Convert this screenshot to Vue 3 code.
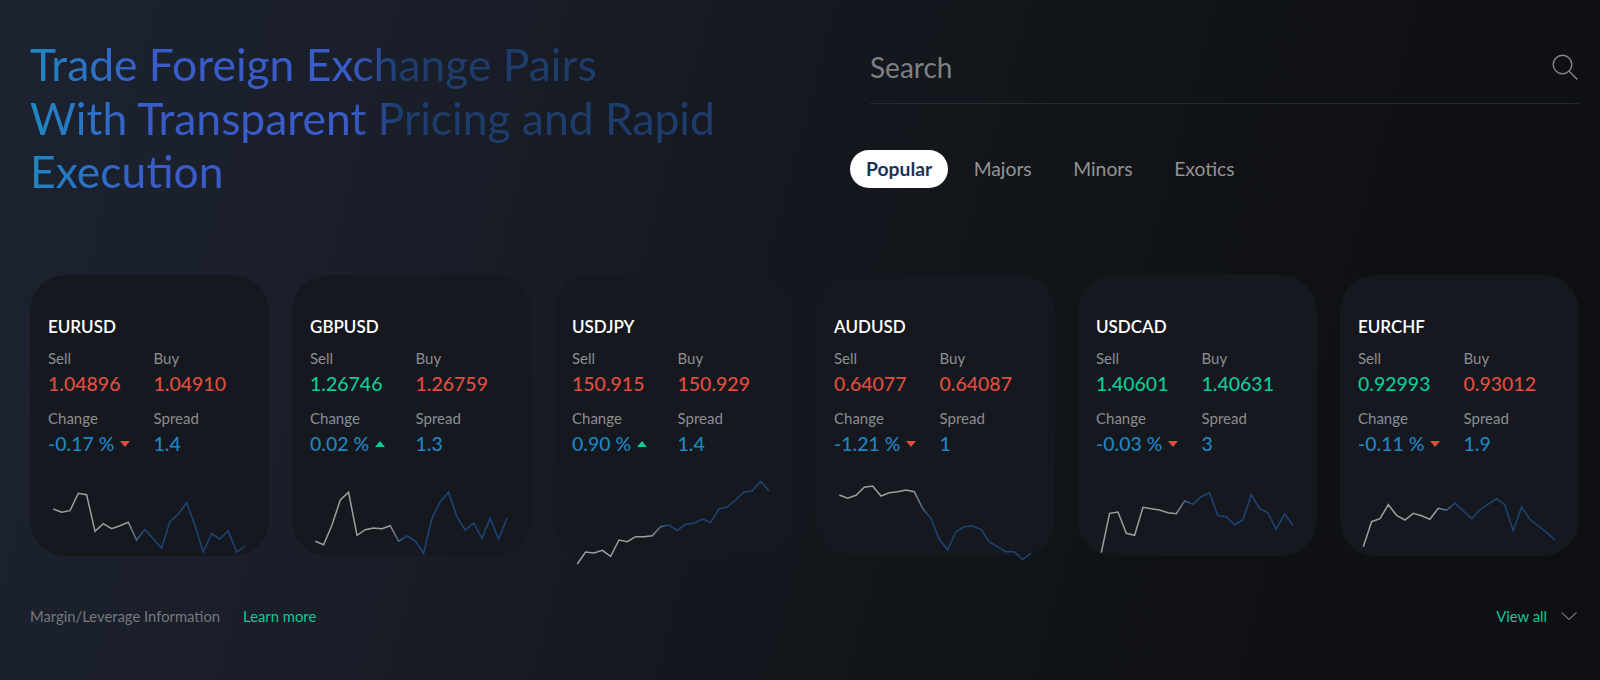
<script setup>
const cards = [
  { name: 'EURUSD', sell: '1.04896', buy: '1.04910', sellUp: false, buyUp: false, change: '-0.17 %', up: false, spread: '1.4',
    ys: [117,127,122,70,74,184,161,176,167,157,210,178,206,235,155,133,98,165,246,191,207,182,246,228] },
  { name: 'GBPUSD', sell: '1.26746', buy: '1.26759', sellUp: true, buyUp: false, change: '0.02 %', up: true, spread: '1.3',
    ys: [214,224,165,90,67,196,179,174,176,167,214,198,213,250,145,95,67,140,180,159,205,145,208,145] },
  { name: 'USDJPY', sell: '150.915', buy: '150.929', sellUp: false, buyUp: false, change: '0.90 %', up: true, spread: '1.4',
    ys: [282,246,249,241,259,210,215,200,200,197,170,165,181,163,160,147,157,117,111,90,66,63,34,62] },
  { name: 'AUDUSD', sell: '0.64077', buy: '0.64087', sellUp: false, buyUp: false, change: '-1.21 %', up: false, spread: '1',
    ys: [75,85,76,52,48,78,68,65,60,65,115,145,208,240,185,170,168,178,216,230,245,245,268,250] },
  { name: 'USDCAD', sell: '1.40601', buy: '1.40631', sellUp: true, buyUp: true, change: '-0.03 %', up: false, spread: '3',
    ys: [248,130,126,190,196,112,116,120,128,131,93,103,80,68,137,140,164,150,74,116,128,178,132,166] },
  { name: 'EURCHF', sell: '0.92993', buy: '0.93012', sellUp: true, buyUp: false, change: '-0.11 %', up: false, spread: '1.9',
    ys: [230,155,146,104,136,150,130,137,148,115,121,100,122,146,120,102,86,105,182,111,148,168,187,210] },
]
const points = (ys) =>
  ys.map((v, i) => `${(23.3 + i * 8.33).toFixed(1)},${(v / 3).toFixed(1)}`).join(' ')
const tabs = ['Popular', 'Majors', 'Minors', 'Exotics']
</script>

<template>
  <div class="page">
    <header class="head">
      <h1 class="title">Trade Foreign Exchange Pairs<br />With Transparent Pricing and Rapid<br />Execution</h1>
      <div class="side">
        <div class="search">
          <span class="search-text">Search</span>
          <svg class="search-icon" viewBox="0 0 26 26" fill="none" stroke="#85878a" stroke-width="1.4">
            <circle cx="10.5" cy="10.5" r="9.3" />
            <path d="M17.2 17.2 25.4 25.4" />
          </svg>
        </div>
        <nav class="tabs">
          <span v-for="(t, i) in tabs" :key="t" class="tab" :class="{ active: i === 0 }">{{ t }}</span>
        </nav>
      </div>
    </header>

    <section class="cards">
      <article v-for="(c, i) in cards" :key="c.name" class="card">
        <h2 class="pair">{{ c.name }}</h2>
        <div class="grid">
          <div>
            <div class="label">Sell</div>
            <div class="value" :class="c.sellUp ? 'green' : 'red'">{{ c.sell }}</div>
          </div>
          <div>
            <div class="label">Buy</div>
            <div class="value" :class="c.buyUp ? 'green' : 'red'">{{ c.buy }}</div>
          </div>
          <div>
            <div class="label">Change</div>
            <div class="value blue change">
              {{ c.change }}
              <span class="tri" :class="c.up ? 'tri-up' : 'tri-down'"></span>
            </div>
          </div>
          <div>
            <div class="label">Spread</div>
            <div class="value blue">{{ c.spread }}</div>
          </div>
        </div>
        <svg class="spark" viewBox="0 0 239 90" fill="none">
          <defs>
            <linearGradient :id="'spark' + i" x1="0" y1="0" x2="1" y2="0">
              <stop offset="0.38" stop-color="#9c9d9f" />
              <stop offset="0.47" stop-color="#1d4476" />
            </linearGradient>
          </defs>
          <polyline :points="points(c.ys)" :stroke="`url(#spark${i})`" stroke-width="1.5" />
        </svg>
      </article>
    </section>

    <footer class="foot">
      <span class="margin">Margin/Leverage Information</span>
      <span class="link learn">Learn more</span>
      <span class="link view">View all</span>
      <svg class="chev" viewBox="0 0 16 8" fill="none" stroke="#75777a" stroke-width="1.2">
        <path d="M.4.4 8 7.4 15.6.4" />
      </svg>
    </footer>
  </div>
</template>

<style>
html, body { margin: 0; background: #0e1013; }
</style>

<style scoped>
.page {
  box-sizing: border-box;
  width: 1600px;
  height: 680px;
  padding: 37px 21px 0 30px;
  overflow: hidden;
  font-family: Lato, "Open Sans", sans-serif;
  background: linear-gradient(105deg, #1c2230 0%, #191e29 25%, #14171d 50%, #0f1114 78%, #0d0f12 100%);
}
.head {
  display: flex;
  height: 238px;
}
.title {
  width: 740px;
  margin: 0 80px 0 0;
  font-size: 44.4px;
  line-height: 53.5px;
  font-weight: 400;
  height: 162px;
  color: transparent;
  background: linear-gradient(90deg, #1f87c0 0, #3a5cc8 120px, #3a5cc8 320px, #1e3d6c 370px, #1e3d6c 100%);
  -webkit-background-clip: text;
  background-clip: text;
}
.side {
  flex: 1;
}
.search {
  display: flex;
  align-items: center;
  justify-content: space-between;
  box-sizing: border-box;
  margin-left: 20px;
  padding: 2px 1px 8px 0;
  height: 67px;
  border-bottom: 1px solid #222a36;
}
.search-text {
  font-size: 28px;
  color: #7e8084;
}
.search-icon {
  width: 26px;
  height: 26px;
}
.tabs {
  display: flex;
  gap: 9.5px;
  margin-top: 46px;
}
.tab {
  padding: 0 16px;
  height: 38px;
  line-height: 38px;
  font-size: 19.3px;
  color: #929497;
}
.tab.active {
  background: #fff;
  border-radius: 19px;
  color: #1c3354;
  font-weight: 700;
}
.cards {
  display: grid;
  grid-template-columns: repeat(6, 239px);
  gap: 23px;
}
.card {
  box-sizing: border-box;
  height: 281px;
  padding: 41px 18px 0;
  border-radius: 36px;
  background: #15181e;
}
.pair {
  margin: 0 0 10px;
  font-size: 17px;
  line-height: 22px;
  font-weight: 600;
  color: #fff;
}
.grid {
  display: grid;
  grid-template-columns: 105.5px 1fr;
  row-gap: 11px;
}
.label {
  font-size: 15px;
  line-height: 21px;
  color: #8c8e91;
}
.value {
  margin-top: 1px;
  font-size: 19.5px;
  line-height: 27px;
  white-space: nowrap;
  font-weight: 500;
}
.red { color: #e04e3f; }
.green { color: #0cc99a; }
.blue { color: #1f85c0; }
.change {
  display: flex;
  align-items: center;
  gap: 6px;
}
.tri {
  width: 0;
  height: 0;
  border-left: 5.5px solid transparent;
  border-right: 5.5px solid transparent;
}
.tri-down { border-top: 6px solid #e04e3f; }
.tri-up { border-bottom: 6px solid #0cc99a; }
.spark {
  display: block;
  width: 239px;
  height: 90px;
  margin: 13px -18px 0;
  overflow: visible;
}
.foot {
  display: flex;
  align-items: center;
  margin-top: 50px;
  font-size: 14.8px;
  line-height: 20px;
}
.margin { color: #77797d; }
.link { color: #0cc99a; }
.learn { margin-left: 23px; }
.view { margin-left: auto; }
.chev {
  width: 16px;
  height: 8px;
  margin-left: 14px;
  margin-right: 2px;
}
</style>
